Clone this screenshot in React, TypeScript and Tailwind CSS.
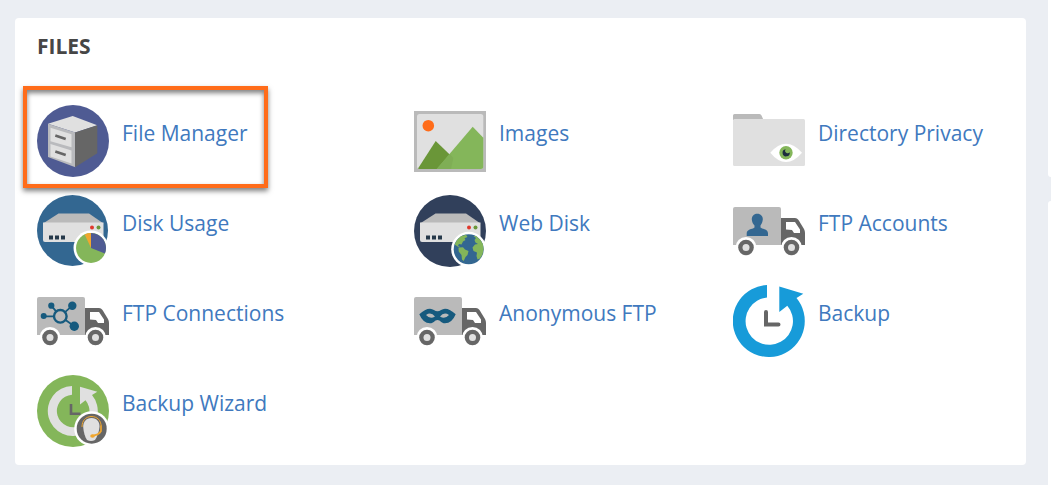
import React from 'react';

const Svg = ({ children }: { children: React.ReactNode }) => (
  <svg viewBox="0 0 72 72" className="w-18 h-18 shrink-0" aria-hidden="true">
    {children}
  </svg>
);

const FileManagerIcon = () => (
  <Svg>
    <circle cx="36" cy="36" r="36" fill="#4f5b93" />
    <path d="M11 18.7 35.7 11 60.3 20.3 38.3 27.5Z" fill="#e0e0e0" />
    <path d="M11 18.7 38.3 27.5V62.3L11 52Z" fill="#b9babd" />
    <path d="M38 27.5 60.3 20.3V48.3L38 62.3Z" fill="#666" />
    <path d="M13.5 22.7 34.5 29.3V42.3L13.5 36.3ZM13.5 39 34.5 45.5V58.5L13.5 51.5Z" fill="#e0e0e0" />
    <path d="M18.3 30.6 28.7 34M18.3 46.6 28.7 50" stroke="#666" strokeWidth="2.6" />
  </Svg>
);

const ImagesIcon = () => (
  <Svg>
    <rect y="6" width="72" height="61" fill="#bababa" />
    <rect x="3" y="9" width="66.3" height="55" rx="2.5" fill="#e0e0e0" />
    <circle cx="14.3" cy="20.7" r="5.8" fill="#ff6c1a" />
    <path d="M4 63.6 21.7 36 39.3 53 37 64H5Z" fill="#6a9638" />
    <path d="M22.7 64 58.7 21.7 69.3 32.7V62Q69.3 64 67 64Z" fill="#84b65a" />
    <path d="M35.8 49 39.3 53 37 64H22.7Z" fill="#7fae55" />
  </Svg>
);

const DirectoryPrivacyIcon = () => (
  <Svg>
    <path d="M0 15V10.5Q0 9 1.5 9H26.5Q28 9 28.5 10.5L30.5 15Z" fill="#bababa" />
    <rect y="14" width="72" height="47" rx="1.5" fill="#e0e0e0" />
    <path d="M37.3 47.7Q45 38.7 53 38.7T69 47.7Q61 57 53 57T37.3 47.7Z" fill="#fff" />
    <circle cx="53" cy="47.7" r="6.7" fill="#84b65a" />
    <path d="M52.7 44.2A3.6 3.6 0 1 0 56.7 47.2A2 2 0 0 1 52.7 44.2Z" fill="#1b2c3d" />
  </Svg>
);

const Server = () => (
  <>
    <path d="M6 28.5 21.5 18.5H52L66.5 28.5Z" fill="#bababa" />
    <path d="M6 27.5H66.5V47H8Q6 47 6 45Z" fill="#e0e0e0" />
    <circle cx="55" cy="32.5" r="2" fill="#e0382c" />
    <circle cx="61.5" cy="32.5" r="2" fill="#6a9638" />
    <path d="M12 40.5h4v4h-4zM18 40.5h4v4h-4zM24 40.5h4v4h-4z" fill="#26394a" />
  </>
);

const DiskUsageIcon = () => (
  <Svg>
    <circle cx="35.5" cy="35.5" r="35.5" fill="#336791" />
    <Server />
    <circle cx="54" cy="53" r="17.5" fill="#fff" />
    <circle cx="54" cy="53" r="15" fill="#84b65a" />
    <path d="M54 53V38A15 15 0 0 1 67.9 58.6Z" fill="#4f5b93" />
    <path d="M54 53 47.7 39.4A15 15 0 0 1 54 38Z" fill="#f0a62e" />
  </Svg>
);

const WebDiskIcon = () => (
  <Svg>
    <circle cx="36" cy="36" r="36" fill="#31405b" />
    <Server />
    <circle cx="54.7" cy="54.3" r="17.5" fill="#fff" />
    <circle cx="54.7" cy="54.3" r="15" fill="#336791" />
    <g fill="#84b65a">
      <path d="M40.7 49.5 43 45 47 41.2 52 39.7 53.5 42 50.5 43.2 51.5 45 49 46.5 47.5 49.5 45 49 44 50.5 46 52 43.5 51.5Z" />
      <path d="M44.5 52.5 49 52.3 51 54.5 54.5 56 53.5 60 51.5 62 49.7 66 48 64.5 47.5 60 44.7 56.5Z" />
      <path d="M59.5 41 62 41 66.5 45 68.8 49 69.6 54 68.5 59.5 66 63.5 63.5 64.5 62.5 61 63 57.5 59.5 56 58.5 52.5 61 49.5 64 49 61.5 47.5 60.5 45 62 43Z" />
    </g>
  </Svg>
);

// delivery truck, children are drawn on the cargo box
const Truck = ({ children }: { children: React.ReactNode }) => (
  <Svg>
    <path d="M2 12H46Q48 12 48 14V50H0V14Q0 12 2 12Z" fill="#bababa" />
    <path d="M48 23H62Q64 23 65.5 25L71 34Q72 36 72 38V50H48Z" fill="#666" />
    <path d="M53 27H62L67 34.5V38H61L59 35 53 34.5Z" fill="#fff" />
    {[13, 58.5].map((x) => (
      <g key={x}>
        <circle cx={x} cy="52.5" r="10.5" fill="#fff" />
        <circle cx={x} cy="52.5" r="7.8" fill="#666" />
        <circle cx={x} cy="52.5" r="3.5" fill="#e0e0e0" />
      </g>
    ))}
    {children}
  </Svg>
);

const FtpAccountsIcon = () => (
  <Truck>
    <path
      d="M24.3 18.7C28 18.7 30 21.5 29.8 24.5C29.6 27 28.5 29 27.5 30.5V32.5C30 34.5 35 34 35 38.5V41H13.7V38.5C13.7 34 19 34.5 21.5 32.5V30.5C20 29 19 27 18.8 24.5C18.7 21.5 20.5 18.7 24.3 18.7Z"
      fill="#336791"
    />
  </Truck>
);

const FtpConnectionsIcon = () => (
  <Truck>
    <g fill="#165a7e">
      <path d="M23.3 31.3 14.3 20.7M23.3 31.3 35.3 20.7M23.3 31.3H6.7M23.3 31.3 37.3 41.3" stroke="#165a7e" strokeWidth="1.8" />
      <circle cx="14.3" cy="20.7" r="3.1" />
      <circle cx="35.3" cy="20.7" r="4.2" />
      <circle cx="6.7" cy="31" r="3" />
      <circle cx="37.3" cy="41.3" r="4.7" />
    </g>
    <circle cx="23.3" cy="31.3" r="6.3" fill="#bababa" stroke="#165a7e" strokeWidth="2.4" />
  </Truck>
);

const AnonymousFtpIcon = () => (
  <Truck>
    <path
      d="M5.3 29.3Q11 23.7 16 23.7C19 23.7 21 26.3 23.5 26.3S28 23.7 31 23.7Q36 23.7 41.7 29.3Q38 38.3 31 38.3C27 38.3 26.5 35 23.5 35S20 38.3 16 38.3Q9 38.3 5.3 29.3Z"
      fill="#165a7e"
    />
    <path d="M12 30Q17 26.5 21 31.5Q16 34.5 12 30ZM35 30Q30 26.5 26 31.5Q31 34.5 35 30Z" fill="#bababa" />
  </Truck>
);

const BackupIcon = () => (
  <Svg>
    <path d="M34 0A36 36 0 1 0 63.5 13L70.3 8.7 46.3 1.5V27L54.3 20.7A23.7 23.7 0 1 1 34 12.5Z" fill="#179bd9" />
    <path d="M33 27V39.5H45.5" fill="none" stroke="#666" strokeWidth="4" strokeLinecap="round" />
  </Svg>
);

const BackupWizardIcon = () => (
  <Svg>
    <circle cx="36" cy="36" r="36" fill="#84b65a" />
    <path d="M35 11A25 25 0 1 0 55 20L60.3 16.7 43 11.7V29.5L48.5 25.3A16.3 16.3 0 1 1 35 19.7Z" fill="#e0e0e0" />
    <path d="M34 29V38.7H43.5" fill="none" stroke="#666" strokeWidth="2.6" />
    <circle cx="54.7" cy="53.7" r="17.5" fill="#fff" />
    <circle cx="54.7" cy="53.7" r="15" fill="#666" />
    <path d="M54.5 43C60 43 62.8 47 62.5 52C62 57 60 62 58 65Q54 67 50 65C48 62 46.5 57 46.2 52C46 47 49 43 54.5 43Z" fill="#e0e0e0" />
    <path d="M45 52C45 45.5 48.5 42 54 41.5C60.5 41.5 63.8 45.5 64.2 51" fill="none" stroke="#f0a62e" strokeWidth="1" />
    <path d="M64 50.5V56Q62 60 55 60.8" fill="none" stroke="#f0a62e" strokeWidth="1.7" />
    <ellipse cx="55.5" cy="61" rx="2.3" ry="1.7" fill="#f0a62e" />
  </Svg>
);

const items = [
  { label: 'File Manager', icon: FileManagerIcon, highlighted: true },
  { label: 'Images', icon: ImagesIcon },
  { label: 'Directory Privacy', icon: DirectoryPrivacyIcon },
  { label: 'Disk Usage', icon: DiskUsageIcon },
  { label: 'Web Disk', icon: WebDiskIcon },
  { label: 'FTP Accounts', icon: FtpAccountsIcon },
  { label: 'FTP Connections', icon: FtpConnectionsIcon },
  { label: 'Anonymous FTP', icon: AnonymousFtpIcon },
  { label: 'Backup', icon: BackupIcon },
  { label: 'Backup Wizard', icon: BackupWizardIcon },
];

export default function App() {
  return (
    <div className="flex min-h-screen overflow-hidden bg-[#ebeef3] font-['Open_Sans',sans-serif] text-[21px] leading-7">
      <main className="flex-1 pt-[18px] pb-5 pl-[15px]">
        <section className="rounded-sm bg-white px-[22px] pt-3.5 pb-[18px]">
          <h2 className="font-bold text-[#464646] uppercase">Files</h2>
          <ul className="mt-[45px] grid grid-cols-[377fr_319fr_271fr] gap-y-[18px]">
            {items.map(({ label, icon: Icon, highlighted }) => (
              <li key={label} className="flex">
                <a href="#" className="relative flex items-start gap-[13px] whitespace-nowrap text-[#4079be]">
                  <Icon />
                  <span className="pt-3.5">{label}</span>
                  {highlighted && (
                    <span className="absolute -top-[19px] -right-5 -bottom-[11px] -left-3.5 border-4 border-[#ff6c1a] shadow-[0_3px_5px_rgba(0,0,0,0.5),inset_0_3px_5px_rgba(0,0,0,0.5)]" />
                  )}
                </a>
              </li>
            ))}
          </ul>
        </section>
      </main>

      {/* edge of the sidebar cards */}
      <aside className="ml-[22px] flex w-[3px] flex-col gap-6">
        <div className="h-[177px] rounded-bl-sm bg-white" />
        <div className="flex-1 rounded-tl-sm bg-white" />
      </aside>
    </div>
  );
}
